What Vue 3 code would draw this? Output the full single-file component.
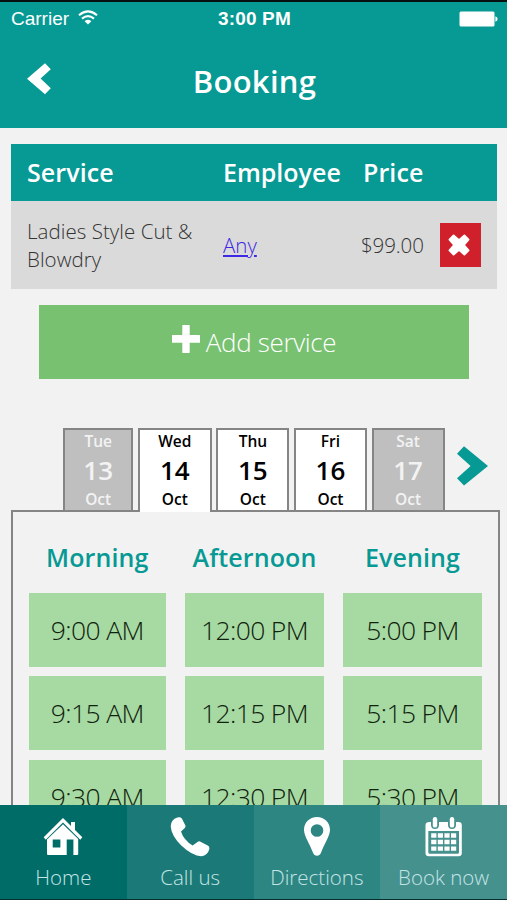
<script setup>
const tabs = [
  { day: 'Tue', date: 13, off: true },
  { day: 'Wed', date: 14, active: true },
  { day: 'Thu', date: 15 },
  { day: 'Fri', date: 16 },
  { day: 'Sat', date: 17, off: true },
]
const periods = [
  { name: 'Morning', slots: ['9:00 AM', '9:15 AM', '9:30 AM'] },
  { name: 'Afternoon', slots: ['12:00 PM', '12:15 PM', '12:30 PM'] },
  { name: 'Evening', slots: ['5:00 PM', '5:15 PM', '5:30 PM'] },
]
</script>

<template>
  <div class="screen">
    <header class="top">
      <div class="status">
        <div class="carrier">
          <span>Carrier</span>
          <svg width="20" height="15" viewBox="0 0 20 15">
            <path d="M1 5.2Q10 -2.4 19 5.2" fill="none" stroke="#fff" stroke-width="2.1" />
            <path d="M4 8.6Q10 3.8 16 8.6" fill="none" stroke="#fff" stroke-width="2.1" />
            <path d="M6.6 11.2Q10 8.4 13.4 11.2L10 14.6Z" fill="#fff" />
          </svg>
        </div>
        <div class="clock">3:00 PM</div>
        <div class="battery">
          <svg width="39" height="16" viewBox="0 0 39 16">
            <rect x="0.5" y="0.5" width="35" height="15" rx="1.5" fill="#fff" />
            <path d="M36.4 5.3Q38.6 6 38.6 8T36.4 10.7Z" fill="#fff" />
          </svg>
        </div>
      </div>
      <div class="title-bar">
        <svg class="back" width="24" height="32" viewBox="0 0 24 32">
          <path d="M18 .3L23.8 6.2L13.6 15.5L23.8 25.2L18 31.2L0 15.7Z" fill="#fff" />
        </svg>
        <h1>Booking</h1>
      </div>
    </header>

    <section class="cart">
      <div class="row head">
        <span class="service">Service</span>
        <span class="employee">Employee</span>
        <span class="price">Price</span>
      </div>
      <div class="row item">
        <span class="service">Ladies Style Cut &amp;<br />Blowdry</span>
        <span class="employee"><a>Any</a></span>
        <span class="price">$99.00</span>
        <button class="remove">
          <svg width="22" height="22" viewBox="0 0 22 22">
            <path d="M5.6 1.5L11 6.3L16.4 1.5L20.5 5.6L15.7 11L20.5 16.4L16.4 20.5L11 15.7L5.6 20.5L1.5 16.4L6.3 11L1.5 5.6Z" fill="#fff" stroke="#fff" stroke-width="2" stroke-linejoin="round" />
          </svg>
        </button>
      </div>
    </section>

    <button class="add">
      <svg width="28" height="28" viewBox="0 0 28 28">
        <path d="M10.3 .5Q10.3 0 10.8 0H17.2Q17.7 0 17.7 .5V10H27.5Q28 10 28 10.5V17.2Q28 17.7 27.5 17.7H17.7V27.5Q17.7 28 17.2 28H10.8Q10.3 28 10.3 27.5V17.7H.5Q0 17.7 0 17.2V10.5Q0 10 .5 10H10.3Z" fill="#fff" />
      </svg>
      <span>Add service</span>
    </button>

    <nav class="days">
      <div v-for="t in tabs" :key="t.date" class="tab" :class="{ off: t.off, active: t.active }">
        <span class="small">{{ t.day }}</span>
        <span class="num">{{ t.date }}</span>
        <span class="small">Oct</span>
      </div>
      <svg class="next" width="31" height="40" viewBox="0 0 31 40">
        <path d="M7 .3L31 20L7 39.5L0 32.3L13.6 20L0 7.8Z" fill="#079994" />
      </svg>
    </nav>

    <main class="panel">
      <div v-for="p in periods" :key="p.name" class="col">
        <h2>{{ p.name }}</h2>
        <div v-for="s in p.slots" :key="s" class="slot">{{ s }}</div>
      </div>
    </main>

    <footer class="bottom">
      <a class="home">
        <svg width="40" height="40" viewBox="0 0 40 40">
          <path d="M20 1L28 9V5H32V13L39.3 20.3L37.3 22.8L20 5.6L2.7 22.8L.7 20.3Z" fill="#fff" />
          <path d="M20 7.2L35.2 22V37Q35.2 38 34.2 38H30.4V22.6H23.7V38H5Q4 38 4 37V22.4ZM9.7 22.6V30.6H17.4V22.6Z" fill="#fff" fill-rule="evenodd" />
        </svg>
        <span>Home</span>
      </a>
      <a class="call">
        <svg width="40" height="40" viewBox="0 0 40 40">
          <path d="M7.3 .5Q10.6 -.3 12 1.7L15.5 8.8Q15.8 10 14.8 11L11 14.4Q13.6 22.7 22.6 28.6L28.2 24.6Q29.3 24.1 30.5 24.7L38.2 28.8Q39.8 30 39.2 32.5Q37.6 38.4 31.5 39.2Q22.5 39.3 11.3 28.6Q1.2 18.3 .7 9.2Q1 2.6 7.3 .5Z" fill="#fff" />
        </svg>
        <span>Call us</span>
      </a>
      <a class="directions">
        <svg width="40" height="40" viewBox="0 0 40 40">
          <path d="M20 0C27.5 0 33 5.5 33 12.8C33 19 27.2 27 24 35.8C22.7 39.8 17.3 39.8 16 35.8C12.8 27 7 19 7 12.8C7 5.5 12.5 0 20 0ZM20 7.2A6.3 6.3 0 1 0 20 19.8A6.3 6.3 0 1 0 20 7.2Z" fill="#fff" fill-rule="evenodd" />
        </svg>
        <span>Directions</span>
      </a>
      <a class="book">
        <svg width="40" height="40" viewBox="0 0 40 40">
          <path d="M5.5 5H7V8.5Q7.5 12 11 12T15 8.5V5H24V8.5Q24.5 12 28 12T32 8.5V5H34.5Q37.8 5 37.8 8.3V36Q37.8 39.2 34.5 39.2H4.8Q1.5 39.2 1.5 36V8.3Q1.5 5 5.5 5ZM4.3 14V35.2Q4.3 36.7 5.8 36.7H33.5Q35 36.7 35 35.2V14Z" fill="#fff" fill-rule="evenodd" />
          <rect x="8.8" y="0" width="4.4" height="10.6" rx="2.2" fill="#fff" />
          <rect x="25.8" y="0" width="4.4" height="10.6" rx="2.2" fill="#fff" />
          <path d="M7.2 16.3h5.2v4.4h-5.2zM13.8 16.3h5.2v4.4h-5.2zM20.4 16.3h5.2v4.4h-5.2zM27 16.3h5.2v4.4h-5.2zM7.2 22.8h5.2v4.4h-5.2zM13.8 22.8h5.2v4.4h-5.2zM20.4 22.8h5.2v4.4h-5.2zM27 22.8h5.2v4.4h-5.2zM7.2 29.4h5.2v4.4h-5.2zM13.8 29.4h5.2v4.4h-5.2zM20.4 29.4h5.2v4.4h-5.2zM27 29.4h5.2v4.4h-5.2z" fill="#fff" />
        </svg>
        <span>Book now</span>
      </a>
    </footer>
  </div>
</template>

<style>
body {
  background: #f2f2f2;
}
</style>

<style scoped>
* {
  box-sizing: border-box;
}
.screen {
  width: 507px;
  height: 900px;
  overflow: hidden;
  display: flex;
  flex-direction: column;
  background: #f2f2f2;
  font-family: 'Open Sans', sans-serif;
  white-space: nowrap;
}
svg {
  display: block;
  flex: none;
}
button {
  border: 0;
  padding: 0;
  font-family: inherit;
}
.top {
  flex: none;
  height: 127.5px;
  background: #079994;
  border-top: 2px solid #06100f;
  color: #fff;
}
.status {
  display: grid;
  grid-template-columns: 1fr auto 1fr;
  height: 33px;
  align-items: center;
  padding: 0 9px 0 11px;
  font-family: 'Liberation Sans', sans-serif;
  font-size: 19px;
}
.carrier {
  display: flex;
  align-items: center;
  gap: 9px;
}
.carrier svg {
  margin-bottom: 2px;
}
.clock {
  font-weight: 700;
  font-size: 19px;
  letter-spacing: 0.15px;
}
.battery {
  display: flex;
  justify-content: flex-end;
}
.title-bar {
  display: grid;
  grid-template-columns: 1fr auto 1fr;
  align-items: center;
  height: 91px;
  padding-left: 27px;
  padding-right: 25px;
}
.back {
  margin-bottom: 3px;
}
h1 {
  margin: 0;
  font-size: 31px;
  line-height: 40px;
  font-weight: 600;
  letter-spacing: 0.25px;
}
.cart {
  flex: none;
  margin: 16px 10px 0 11px;
}
.row {
  display: grid;
  grid-template-columns: 196px 137px 80px 41px;
  align-items: center;
  padding-left: 16px;
}
.head {
  height: 57.5px;
  background: #079994;
  color: #fff;
  font-size: 25px;
  font-weight: 600;
}
.head .service {
  letter-spacing: 0.1px;
}
.head .price {
  padding-left: 3px;
  letter-spacing: 0.1px;
}
.item {
  height: 88px;
  background: #dadada;
  color: #333;
  font-size: 20.5px;
  line-height: 28.5px;
  font-weight: 300;
}
.item .service {
  letter-spacing: 0.05px;
}
.item .price {
  padding-left: 1px;
  letter-spacing: -0.1px;
}
.item a {
  color: #3d28e6;
  text-decoration: underline;
}
.remove {
  width: 41px;
  height: 44px;
  padding-right: 3px;
  background: #d0202b;
  display: flex;
  align-items: center;
  justify-content: center;
}
.add {
  flex: none;
  margin: 16px 38px 0 39px;
  height: 74px;
  background: #77c171;
  color: #fff;
  display: flex;
  align-items: center;
  justify-content: center;
  gap: 6px;
  font-size: 26px;
  letter-spacing: -0.35px;
  font-weight: 300;
}
.add svg {
  margin-bottom: 6px;
}
.days {
  flex: none;
  display: grid;
  grid-template-columns: 70px 74px 73px 73px 73px auto;
  justify-content: start;
  align-items: start;
  gap: 4.6px;
  margin: 49px 0 0 63.2px;
  height: 82px;
  position: relative;
  z-index: 1;
}
.tab {
  height: 82px;
  background: #fff;
  border: 2px solid #858585;
  border-bottom: 0;
  display: flex;
  flex-direction: column;
  align-items: center;
  font-weight: 600;
  color: #000;
}
.off {
  background: #bfbfbf;
  color: #f3f3f3;
}
.active {
  height: 84px;
}
.small {
  font-size: 15.5px;
  line-height: 23px;
}
.num {
  font-size: 26px;
  line-height: 35px;
}
.next {
  margin: 18px 0 0 8px;
}
.panel {
  flex: 1;
  min-height: 0;
  overflow: hidden;
  margin: 0 7px 0 11px;
  border: 2px solid #858585;
  border-bottom: 0;
  padding: 25.4px 16px 0 15.5px;
  display: grid;
  grid-template-columns: 137.5px 139px 139px;
  column-gap: 19px;
  align-content: start;
}
h2 {
  margin: 0 -10px 15.2px;
  text-align: center;
  color: #079994;
  font-size: 25px;
  line-height: 40px;
  font-weight: 600;
  letter-spacing: 0.1px;
}
.slot {
  height: 74px;
  margin-bottom: 9.7px;
  background: #a7d9a2;
  color: #0f220e;
  font-size: 26.5px;
  letter-spacing: -0.65px;
  font-weight: 300;
  line-height: 74px;
  text-align: center;
}
.bottom {
  flex: none;
  height: 95.5px;
  border-bottom: 1px solid #06302f;
  display: grid;
  grid-template-columns: repeat(4, 1fr);
}
.bottom a {
  display: flex;
  flex-direction: column;
  align-items: center;
  padding-top: 12.5px;
  color: #c4e4e6;
  font-size: 20.5px;
  font-weight: 300;
  line-height: 28px;
}
.bottom span {
  margin-top: 6px;
}
.home {
  background: #006c68;
}
.call {
  background: #1b7a77;
}
.directions {
  background: #2e8683;
}
.book {
  background: #45918e;
}
</style>
